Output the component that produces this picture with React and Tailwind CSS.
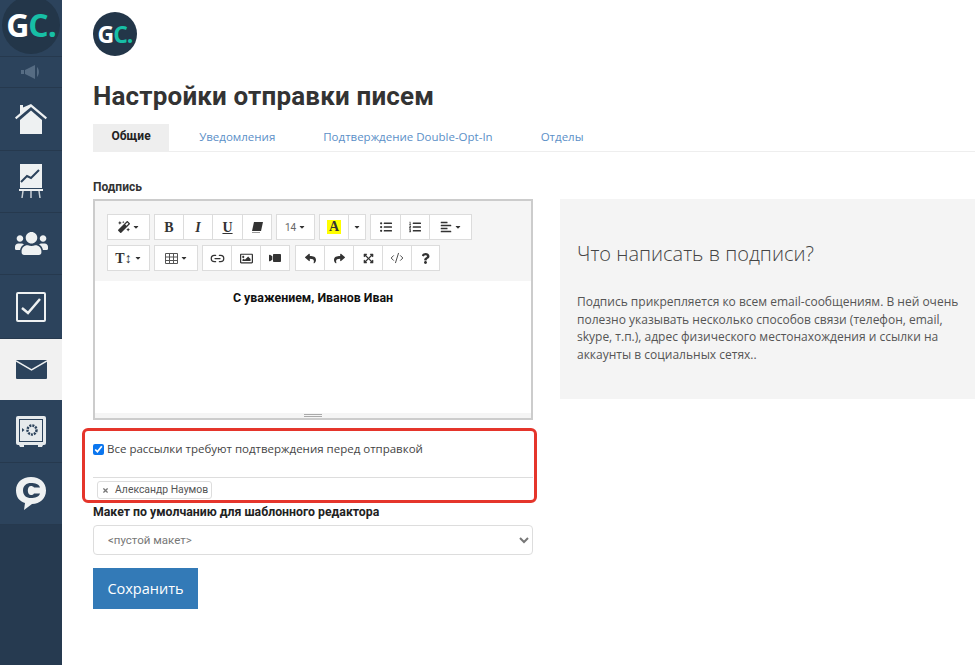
import React from "react";
import {
  FaMagic, FaListUl, FaListOl, FaAlignLeft, FaRegImage, FaVideo, FaReply, FaShare,
  FaExpandArrowsAlt, FaQuestion, FaUsers, FaCaretDown, FaTimes,
} from "react-icons/fa";
import { Link2, CodeXml } from "lucide-react";

const HomeIcon = () => (
  <svg width="32" height="30" viewBox="0 0 32 30" fill="#eef1f2">
    <path d="M5 1h3v2.500L16 0l16 13.500-1.300 1.700L16 3 1.300 15.200 0 13.500l5-4.200z" />
    <path d="M5 16 16 6.500 27 16v14H5z" />
  </svg>
);

const ChartIcon = () => (
  <svg width="24" height="35" viewBox="0 0 24 35" fill="none">
    <rect x="1" y="0" width="22" height="24" fill="#eef1f2" />
    <path d="M2 18l6-6 4 2 8-8" stroke="#2c435c" strokeWidth="2" />
    <path d="M0 25h24v2H0z" fill="#eef1f2" />
    <path d="M4 27l-1 7M12 27v7M20 27l1 7" stroke="#c9d0d6" strokeWidth="1.500" />
  </svg>
);

const TaskIcon = () => (
  <svg width="30" height="30" viewBox="0 0 30 30" fill="none">
    <rect x="1" y="1" width="28" height="28" stroke="#eef1f2" strokeWidth="2" rx="1" />
    <path d="M6 16l6 5L24 7" stroke="#eef1f2" strokeWidth="2.500" />
  </svg>
);

const MailIcon = () => (
  <svg width="31" height="19" viewBox="0 0 31 19">
    <rect width="31" height="19" rx="1" fill="#2c435c" />
    <path d="M0 1l15.500 9L31 1" stroke="#eef1f2" strokeWidth="1.500" fill="none" />
  </svg>
);

const SafeIcon = () => (
  <svg width="30" height="31" viewBox="0 0 30 31" fill="none">
    <rect x="0" y="0" width="30" height="29" rx="2" fill="#e6eaec" />
    <path d="M3 29h5v2H4zM22 29h5l-1 2h-4z" fill="#e6eaec" />
    <rect x="3.500" y="3.500" width="23" height="22" stroke="#2c435c" strokeWidth="1" />
    <circle cx="16" cy="14" r="4.500" stroke="#2c435c" strokeWidth="2.500" strokeDasharray="2 1" />
    <path d="M6 12l2.500 2L6 16z" fill="#2c435c" />
  </svg>
);

const ChatIcon = () => (
  <svg width="30" height="33" viewBox="0 0 30 33">
    <path d="M15 0c9 0 15 5.500 15 13.500S24 27 16 27l-8 6 1-7C3.500 24.500 0 20 0 13.500 0 5.500 6 0 15 0z" fill="#eef1f2" />
    <path d="M24 10.500C23 7 19 6 15 6c-4.500 0-8 2.500-8 7.500S10.500 21 15 21c4 0 8-1 9-4.500h-6c-.6 1-1.800 1.500-3 1.500-1.900 0-3.200-1.800-3.200-4.500S13.100 9 15 9c1.200 0 2.400.5 3 1.500z" fill="#2c435c" />
  </svg>
);

const SpeakerIcon = () => (
  <svg width="20" height="14" viewBox="0 0 20 14" fill="#566c83">
    <rect x="0" y="5" width="3" height="4" />
    <path d="M4 5l10-5v14L4 9z" />
    <path d="M16 2c2.500 2.500 2.500 7.500 0 10z" />
  </svg>
);

const EraserIcon = () => (
  <svg width="12" height="11" viewBox="0 0 12 11" fill="#333">
    <path d="M3 0h9l-2 9H1z" />
    <path d="M1 10h8v1H1z" fill="#999" />
  </svg>
);

const sideItems = [
  { key: "home", h: "h-[63px]", icon: <HomeIcon /> },
  { key: "chart", h: "h-[62px]", icon: <ChartIcon /> },
  { key: "users", h: "h-[62px]", icon: <FaUsers size={33} color="#eef1f2" /> },
  { key: "tasks", h: "h-[64px]", icon: <TaskIcon /> },
  { key: "mail", h: "h-[61px]", icon: <MailIcon />, active: true },
  { key: "safe", h: "h-[63px]", icon: <SafeIcon /> },
  { key: "chat", h: "h-[62px]", icon: <ChatIcon /> },
];

const Btn = ({ w, children, last }) => (
  <div className={`flex h-[26px] items-center justify-center gap-[2px] border border-[#dcdcdc] bg-white text-[#333] ${w} ${last ? "" : "border-r-0"}`}>
    {children}
  </div>
);

const Caret = () => <FaCaretDown size={8} />;

const Group = ({ children }) => <div className="flex">{children}</div>;

export default function App() {
  return (
    <div className="flex min-h-[665px] bg-white font-['Roboto','Noto_Sans',sans-serif] text-[#333]">
      <aside className="flex w-[62px] shrink-0 flex-col overflow-hidden bg-[#263a50]">
        <div className="h-[56px] bg-[#2c435c]">
          <div className="ml-[2px] mt-[-4px] flex h-[58px] w-[58px] items-center justify-center rounded-full bg-[#233649] font-['Open_Sans',sans-serif] text-[32px] font-bold tracking-[-1px]">
            <span className="text-white">G</span>
            <span className="text-[#17bfa6]">C.</span>
          </div>
        </div>
        <div className="flex h-[32px] items-center justify-center border-y border-[#26394e] bg-[#2c435c]">
          <SpeakerIcon />
        </div>
        {sideItems.map((item) => (
          <div
            key={item.key}
            className={`flex items-center justify-center ${item.h} ${item.active ? "bg-[#f1f1f1]" : "border-b border-[#26394e] bg-[#2c435c]"}`}
          >
            {item.icon}
          </div>
        ))}
      </aside>

      <main className="min-w-0 flex-1 pl-[31px] pt-[12px]">
        <div className="flex h-[44px] w-[44px] items-center justify-center rounded-full bg-[#233649] font-['Open_Sans',sans-serif] text-[23px] font-bold tracking-[-1px]">
          <span className="text-white">G</span>
          <span className="text-[#17bfa6]">C.</span>
        </div>

        <h1 className="mt-[23px] h-[34px] text-[26px] font-bold leading-[34px] tracking-[0.17px] text-[#333]">Настройки отправки писем</h1>

        <div className="mt-[11px] flex h-[28px] gap-[12px] border-b border-[#eee] font-['Open_Sans',sans-serif] text-[11.5px] leading-[25px] text-[#5b8fc7]">
          <div className="bg-[#eee] px-[18.500px] font-['Roboto',sans-serif] text-[12px] font-bold text-[#222]">Общие</div>
          <div className="px-[18px]">Уведомления</div>
          <div className="px-[18px]">Подтверждение Double-Opt-In</div>
          <div className="px-[18px]">Отделы</div>
        </div>

        <div className="relative mt-[26px] flex items-start">
          <div className="w-[440px] shrink-0">
            <div className="h-[21px] text-[12px] font-bold leading-[18px]">Подпись</div>

            <div className="h-[221px] border-2 border-[#ccc]">
              <div className="flex h-[80px] flex-col gap-[5px] bg-[#f5f5f5] pl-[12px] pt-[13px]">
                <div className="flex gap-[4px]">
                  <Group><Btn w="w-[43px]" last><FaMagic size={12} /><Caret /></Btn></Group>
                  <Group>
                    <Btn w="w-[29px]"><span className="font-['Liberation_Serif',serif] text-[14px] font-bold">B</span></Btn>
                    <Btn w="w-[29px]"><span className="font-['Liberation_Serif',serif] text-[14px] font-bold italic">I</span></Btn>
                    <Btn w="w-[30px]"><span className="font-['Liberation_Serif',serif] text-[14px] font-bold underline">U</span></Btn>
                    <Btn w="w-[30px]" last><EraserIcon /></Btn>
                  </Group>
                  <Group><Btn w="w-[39px]" last><span className="text-[10px] text-[#666]">14</span><Caret /></Btn></Group>
                  <Group>
                    <Btn w="w-[29px]"><span className="bg-[#ffff00] px-[2px] font-['Liberation_Serif',serif] text-[14px] font-bold leading-[14px]">A</span></Btn>
                    <Btn w="w-[18px]" last><Caret /></Btn>
                  </Group>
                  <Group>
                    <Btn w="w-[30px]"><FaListUl size={12} /></Btn>
                    <Btn w="w-[29px]"><FaListOl size={12} /></Btn>
                    <Btn w="w-[43px]" last><FaAlignLeft size={12} /><Caret /></Btn>
                  </Group>
                </div>
                <div className="flex gap-[4px]">
                  <Group><Btn w="w-[43px]" last><span className="font-['Liberation_Serif',serif] text-[14px] font-bold">T↕</span><Caret /></Btn></Group>
                  <Group>
                    <Btn w="w-[44px]" last>
                      <svg width="13" height="11" viewBox="0 0 13 11" fill="none" stroke="#555"><path d="M.5.5h12v10H.5zM.5 4h12M.5 7.500h12M4.500.5v10M8.500.5v10" /></svg>
                      <Caret />
                    </Btn>
                  </Group>
                  <Group>
                    <Btn w="w-[29px]"><Link2 size={15} strokeWidth={2} /></Btn>
                    <Btn w="w-[29px]"><FaRegImage size={13} /></Btn>
                    <Btn w="w-[30px]" last><FaVideo size={12} className="-scale-x-100" /></Btn>
                  </Group>
                  <div className="ml-[1px] flex">
                    <Btn w="w-[29px]"><FaReply size={11} /></Btn>
                    <Btn w="w-[29px]"><FaShare size={11} /></Btn>
                    <Btn w="w-[29px]"><FaExpandArrowsAlt size={11} /></Btn>
                    <Btn w="w-[29px]"><CodeXml size={14} strokeWidth={1.5} /></Btn>
                    <Btn w="w-[29px]" last><FaQuestion size={11} /></Btn>
                  </div>
                </div>
              </div>
              <div className="h-[132px] pt-[9px] text-center text-[12.400px] font-bold leading-[16px] text-[#111]">С уважением, Иванов Иван</div>
              <div className="flex h-[5px] flex-col items-center justify-center gap-[1px] bg-[#f5f5f5]">
                <div className="h-px w-[18px] bg-[#aaa]" />
                <div className="h-px w-[18px] bg-[#aaa]" />
              </div>
            </div>

            <label className="mt-[21px] flex h-[16px] items-center gap-[3px] font-['Open_Sans',sans-serif] text-[11.500px] text-[#444]">
              <input type="checkbox" defaultChecked className="m-0 h-[11px] w-[11px] accent-[#0b76ef]" />
              Все рассылки требуют подтверждения перед отправкой
            </label>

            <div className="mt-[20px] h-[27px] border-t border-[#ddd] pl-[4px] pt-[3px]">
              <div className="flex h-[18px] w-[115px] items-center gap-[6px] whitespace-nowrap rounded-[3px] border border-[#ddd] pl-[4px] text-[10.400px] text-[#555]">
                <FaTimes size={7} color="#777" />
                Александр Наумов
              </div>
            </div>

            <div className="mt-[-1px] h-[22px] text-[12.300px] font-bold leading-[18px] text-[#222]">Макет по умолчанию для шаблонного редактора</div>

            <select className="h-[30px] w-full rounded-[4px] border border-[#ddd] bg-white pl-[10px] text-[11.500px] text-[#777]">
              <option>{"<пустой макет>"}</option>
            </select>

            <button className="mt-[13px] h-[41px] w-[105px] bg-[#337ab7] font-['Open_Sans',sans-serif] text-[14.500px] text-white">Сохранить</button>
          </div>

          <section className="ml-[27px] mt-[21px] h-[200px] flex-1 bg-[#f4f4f4] pl-[17px] pr-[10px] pt-[41px] font-['Open_Sans',sans-serif]">
            <h2 className="text-[20px] font-light leading-[28px] text-[#444]">Что написать в подписи?</h2>
            <p className="mt-[25px] text-[12px] leading-[17.500px] text-[#555]">
              Подпись прикрепляется ко всем email-сообщениям. В ней очень полезно указывать несколько способов связи (телефон, email, skype, т.п.), адрес физического местонахождения и ссылки на аккаунты в социальных сетях..
            </p>
          </section>

          <div className="pointer-events-none absolute left-[-11px] top-[250px] h-[75px] w-[455px] rounded-[6px] border-[3px] border-[#e5352b]" />
        </div>
      </main>
    </div>
  );
}
